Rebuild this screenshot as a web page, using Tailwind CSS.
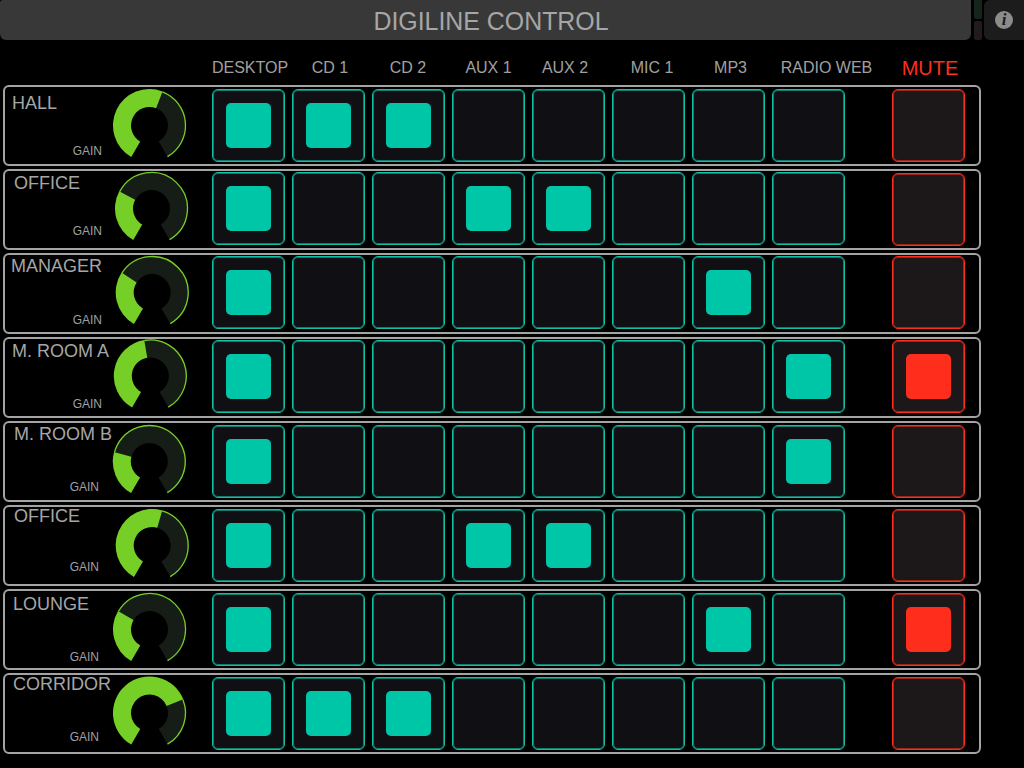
<!DOCTYPE html>
<html lang="en">
<head>
  <meta charset="UTF-8" />
  <title>Digiline Control</title>
  <script src="https://cdn.jsdelivr.net/npm/@tailwindcss/browser@4"></script>
</head>
<body class="bg-black w-[1024px] h-[768px] overflow-hidden font-['Liberation_Sans',Arial,sans-serif]">

  <!-- Title bar -->
  <div class="flex h-[40px]">
    <div class="w-[971px] bg-[#383838] rounded-b-[6px] rounded-tl-[3px] flex items-center justify-center pl-[11px] pt-[4px] text-[24.9px] text-[#a6a6a6]">DIGILINE CONTROL</div>
    <div class="w-[8px] ml-[3px] flex flex-col justify-between">
      <div class="h-[19px] bg-[#16251c] rounded-b-[2px]"></div>
      <div class="h-[19px] bg-[#231a1b] rounded-[2px]"></div>
    </div>
    <div class="w-[40px] ml-[2px] bg-[#1c1c1c] rounded-l-[6px] flex items-center justify-center">
      <div class="w-[18px] h-[18px] rounded-full bg-[#8c8c8c] flex items-center justify-center font-['Liberation_Serif',serif] italic font-bold text-[17px] leading-[18px] text-[#1c1c1c]">i</div>
    </div>
  </div>

  <!-- Column labels -->
  <div class="flex h-[45px] pl-[210px] pt-[17px] text-[16px] leading-[20px] text-[#a0a0a0] text-center whitespace-nowrap">
    <div class="w-[80px] pt-[1px]">DESKTOP</div>
    <div class="w-[80px] pt-[1px]">CD 1</div>
    <div class="w-[76px] pt-[1px]">CD 2</div>
    <div class="w-[85px] pt-[1px]">AUX 1</div>
    <div class="w-[68px] pt-[1px]">AUX 2</div>
    <div class="w-[106px] pt-[1px]">MIC 1</div>
    <div class="w-[51px] pt-[1px]">MP3</div>
    <div class="w-[141px] pt-[1px]">RADIO WEB</div>
    <div class="w-[66px] text-[20px] leading-[22px] text-[#ff2d1f]">MUTE</div>
  </div>

  <!-- Zone rows -->
  <div id="rows" class="flex flex-col gap-[3px] pl-[3px]"></div>

  <script>
    const zones = [
      { name: "HALL", nameCls: "pl-[7px] pt-[8px]", gainCls: "pr-[9px] pb-[6px]", cellCls: "mt-[2px]", cx: 38.5, cy: 38.5, angle: 21, on: [0, 1, 2], mute: false },
      { name: "OFFICE", nameCls: "pl-[9px] pt-[4px]", gainCls: "pr-[9px] pb-[10px]", cellCls: "mt-[1px]", muteCls: "mt-[1px]", cx: 40.5, cy: 37.5, angle: -62, on: [0, 3, 4], mute: false },
      { name: "MANAGER", nameCls: "pl-[6px] pt-[3px]", gainCls: "pr-[9px] pb-[5px]", cellCls: "mt-[1px]", cx: 41.2, cy: 37.5, angle: -57, on: [0, 6], mute: false },
      { name: "M. ROOM A", nameCls: "pl-[7px] pt-[4px]", gainCls: "pr-[9px] pb-[5px]", cellCls: "mt-[1px]", cx: 39.3, cy: 37, angle: -9.5, on: [0, 7], mute: true },
      { name: "M. ROOM B", nameCls: "pl-[9px] pt-[3px]", gainCls: "pr-[12px] pb-[6px]", cellCls: "mt-[2px]", cx: 38.3, cy: 38.5, angle: -75, on: [0, 7], mute: false },
      { name: "OFFICE", nameCls: "pl-[9px] pt-[1px]", gainCls: "pr-[12px] pb-[10px]", cellCls: "mt-[2px]", cx: 41.2, cy: 38.5, angle: 16, on: [0, 3, 4], mute: false },
      { name: "LOUNGE", nameCls: "pl-[8px] pt-[5px]", gainCls: "pr-[12px] pb-[4px]", cellCls: "mt-[2px]", cx: 38.5, cy: 38.5, angle: -59.5, on: [0, 6], mute: true },
      { name: "CORRIDOR", nameCls: "pl-[8px] pt-[1px]", gainCls: "pr-[12px] pb-[8px]", cellCls: "mt-[2px]", cx: 38.5, cy: 38, angle: 68, on: [0, 1, 2], mute: false },
    ];

    // point on a circle, angle in degrees clockwise from the top
    function pt(cx, cy, r, deg) {
      const a = deg * Math.PI / 180;
      return (cx + r * Math.sin(a)).toFixed(2) + " " + (cy - r * Math.cos(a)).toFixed(2);
    }

    function wedge(cx, cy, from, to) {
      const big = to - from > 180 ? 1 : 0;
      return `M${pt(cx, cy, 36.5, from)} A36.5 36.5 0 ${big} 1 ${pt(cx, cy, 36.5, to)} L${pt(cx, cy, 18.5, to)} A18.5 18.5 0 ${big} 0 ${pt(cx, cy, 18.5, from)} Z`;
    }

    function rim(cx, cy, from, to) {
      const big = to - from > 180 ? 1 : 0;
      return `M${pt(cx, cy, 36, from)} A36 36 0 ${big} 1 ${pt(cx, cy, 36, to)}`;
    }

    function knob(z) {
      return `<svg width="80" height="77" viewBox="0 0 80 77" class="shrink-0">
        <path d="${wedge(z.cx, z.cy, z.angle, 150)}" fill="#161d16"/>
        <path d="${rim(z.cx, z.cy, z.angle, 150)}" fill="none" stroke="#76cf26" stroke-width="1.3"/>
        <path d="${wedge(z.cx, z.cy, -150, z.angle)}" fill="#76cf26"/>
      </svg>`;
    }

    function cell(on) {
      const inner = on ? `<div class="w-[45px] h-[45px] rounded-[5px] bg-[#00c6a8]"></div>` : "";
      return `<div class="w-[73px] h-[73px] shrink-0 rounded-[6px] border border-[#12c0a8] shadow-[inset_0_0_0_1px_#0e7d70] bg-[#101014] flex items-center justify-center">${inner}</div>`;
    }

    function muteCell(on, extra) {
      const inner = on ? `<div class="w-[45px] h-[45px] rounded-[5px] bg-[#ff2d1c]"></div>` : "";
      return `<div class="w-[73px] h-[73px] shrink-0 ml-[40px] ${extra} rounded-[6px] border border-[#ff2d1c] shadow-[inset_0_0_0_1px_#a02419] bg-[#1c1718] flex items-center justify-center">${inner}</div>`;
    }

    document.getElementById("rows").innerHTML = zones.map(z => {
      let cells = "";
      for (let i = 0; i < 8; i++) cells += cell(z.on.includes(i));
      return `<div class="w-[978px] h-[81px] rounded-[6px] border-2 border-[#a4a4a4] flex">
        <div class="w-[207px] shrink-0 flex">
          <div class="w-[106px] shrink-0 flex flex-col justify-between">
            <div class="text-[18px] leading-[16px] text-[#a6a6a6] whitespace-nowrap ${z.nameCls}">${z.name}</div>
            <div class="text-[12px] leading-[14px] text-[#a0a0a0] text-right ${z.gainCls}">GAIN</div>
          </div>
          ${knob(z)}
        </div>
        <div class="flex gap-[7px] items-start ${z.cellCls}">${cells}${muteCell(z.mute, z.muteCls || "")}</div>
      </div>`;
    }).join("");
  </script>
</body>
</html>
